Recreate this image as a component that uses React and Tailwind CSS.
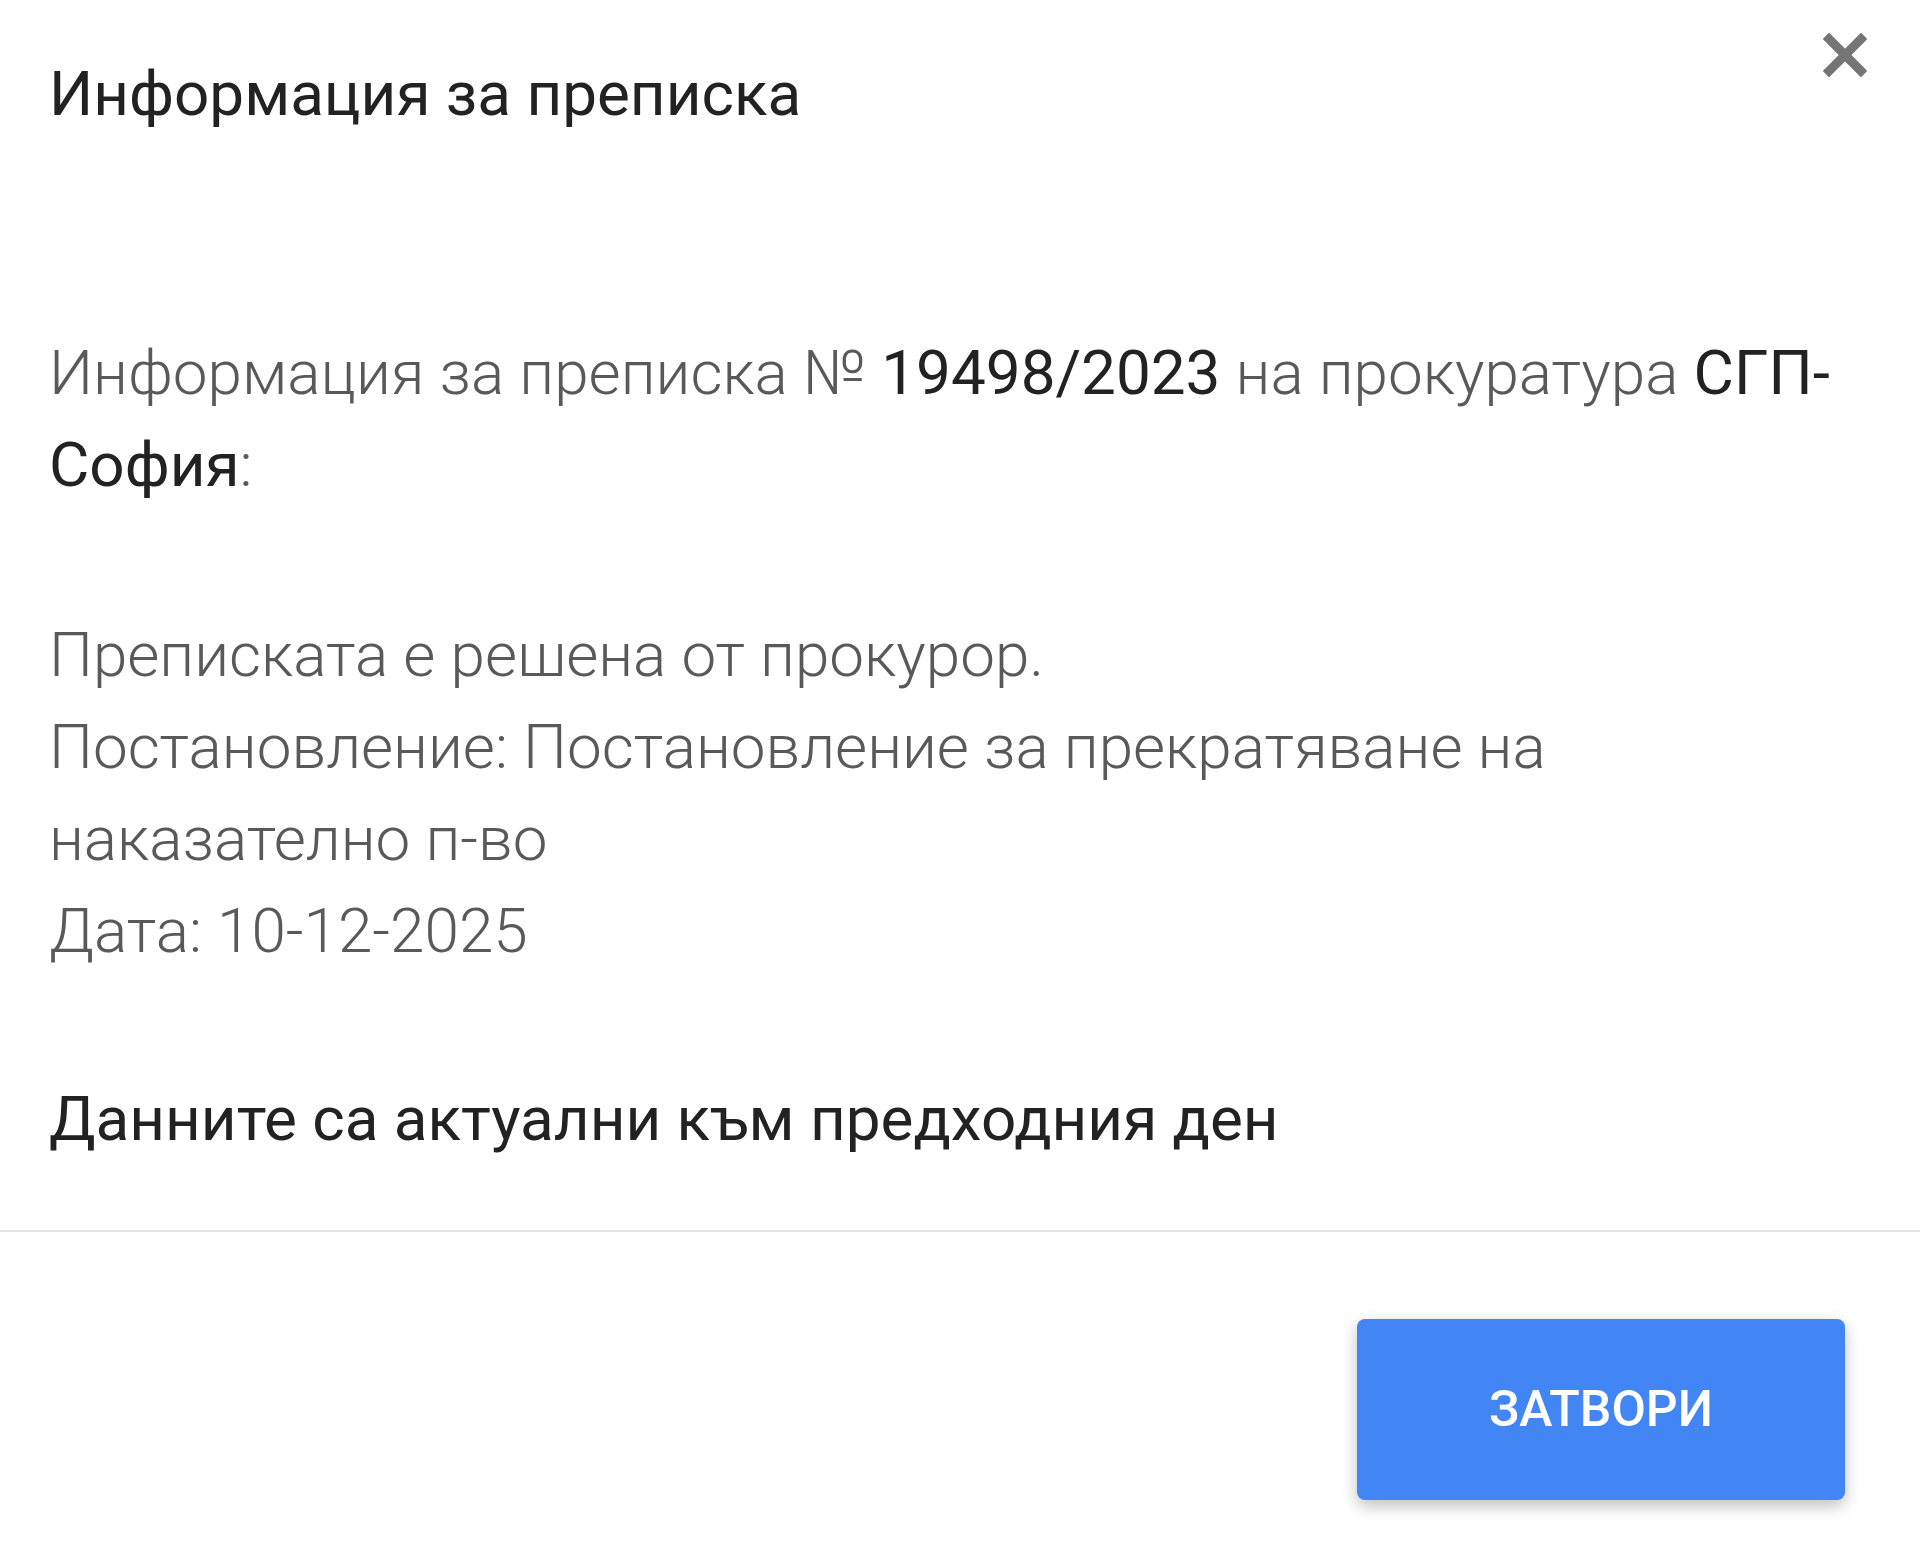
import React from 'react';

const CloseIcon = () => (
    <svg viewBox="0 0 44 44" className="w-[44px] h-[44px]">
        <path d="M6 6 L38 38 M38 6 L6 38" stroke="#757575" strokeWidth="9" strokeLinecap="square" fill="none" />
    </svg>
);

const App = () => {
    return (
        <div className="w-[1920px] h-[1559px] bg-white flex flex-col font-['Roboto',sans-serif]">
            <div className="flex items-start justify-between pl-[49px] pr-[53px] pt-[46px]">
                <h2 className="text-[62px] leading-[96px] font-normal text-[#222]">Информация за преписка</h2>
                <button className="mt-[-13px]">
                    <CloseIcon />
                </button>
            </div>

            <div className="pl-[49px] pr-[75px] mt-[185px] text-[62px] leading-[92px] font-light text-[#595959]">
                <p>
                    Информация за преписка № <span className="font-normal text-[#222]">19498/2023</span> на прокуратура{' '}
                    <span className="font-normal text-[#222]">СГП-София</span>:
                </p>
                <div className="mt-[98px]">
                    <p>Преписката е решена от прокурор.</p>
                    <p>Постановление: Постановление за прекратяване на наказателно п-во</p>
                    <p>Дата: 10-12-2025</p>
                </div>
                <p className="mt-[96px] font-normal text-[#222]">Данните са актуални към предходния ден</p>
            </div>

            <div className="mt-[65px] h-[2px] bg-[#e6e6e6]"></div>

            <div className="flex justify-end pr-[75px] pt-[87px]">
                <button className="w-[488px] h-[181px] rounded-[8px] bg-[#4285f4] text-white text-[50px] font-medium uppercase shadow-[0_6px_16px_rgba(0,0,0,0.25)]">
                    Затвори
                </button>
            </div>
        </div>
    );
};

export default App;
